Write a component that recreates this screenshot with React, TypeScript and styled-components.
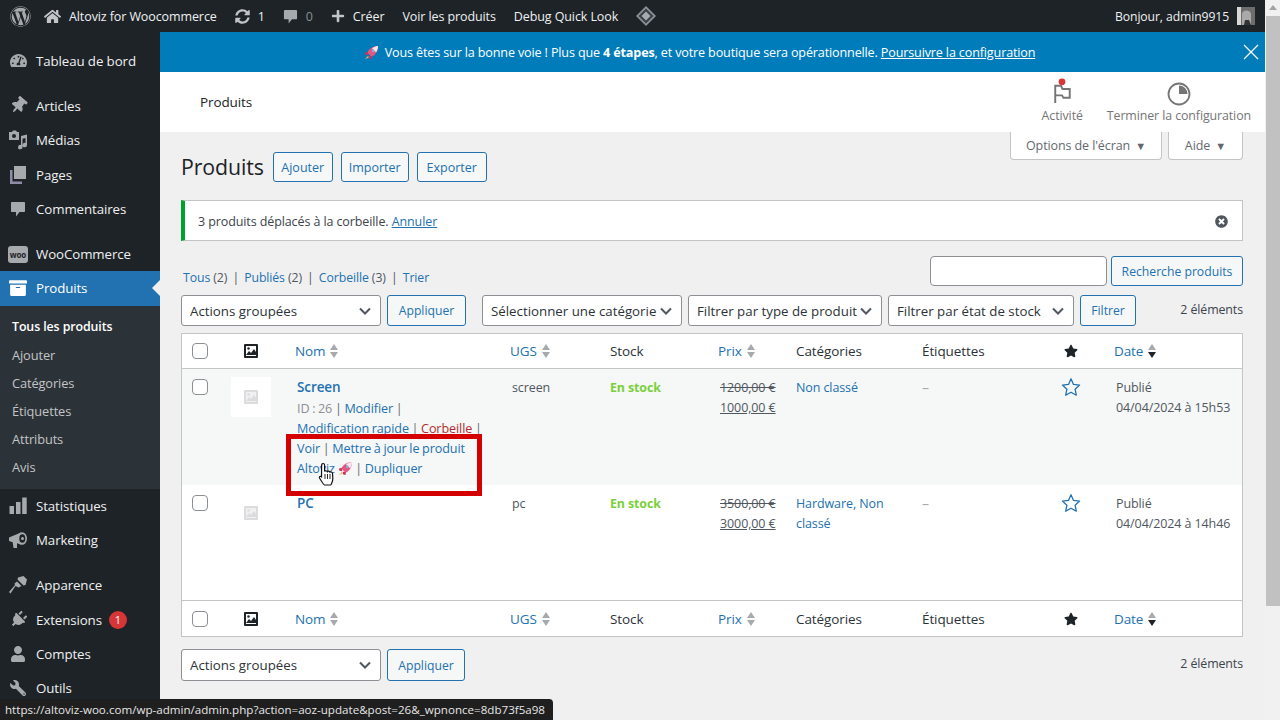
import React from 'react';
import styled, {createGlobalStyle} from "styled-components";
import {
    FaArchive, FaHome, FaPlug, FaPlus, FaStar,
    FaSyncAlt, FaTachometerAlt, FaThumbtack, FaTimesCircle, FaUser, FaWordpress, FaWrench
} from "react-icons/fa";

const GlobalStyle = createGlobalStyle`
    * { box-sizing: border-box; }
    html, body { margin: 0; padding: 0; overflow: hidden; }
    body {
        font-family: "Open Sans", "Noto Sans", sans-serif;
        font-size: 13px;
        letter-spacing: -0.1px;
        color: #3c434a;
    }
`

const blue = "#2271b1";

const COLUMNS = "49px 64px 215px 100px 108px 78px 126px 138px 54px 1fr";

const MediaIcon = () => (
    <svg width="20" height="20" viewBox="0 0 20 20" fill="#a7aaad">
        <path d="M1 2h3l1-1.500h3l1 1.500h2v8H1z"/>
        <circle cx="6" cy="6" r="2" fill="#1d2327"/>
        <path d="M13 6l6-1.500V15a2.200 2.200 0 1 1-1.500-2V8l-3 .7V17a2.200 2.200 0 1 1-1.500-2z"/>
    </svg>
);

const PagesIcon = () => (
    <svg width="18" height="20" viewBox="0 0 18 20" fill="#a7aaad">
        <path d="M5 1h12v13H5z"/>
        <path d="M1 5h2.500v11.500H13V19H1z" fill="#8f8ca8"/>
    </svg>
);

const StatsIcon = () => (
    <svg width="18" height="18" viewBox="0 0 18 18" fill="#a7aaad">
        <rect x="0.500" y="9" width="4.500" height="8"/>
        <rect x="7" y="5" width="4.500" height="12"/>
        <rect x="13.200" y="0.500" width="4.500" height="16.500"/>
    </svg>
);

const CommentIcon = ({size}: { size: number }) => (
    <svg width={size} height={size} viewBox="0 0 16 16" fill="#a7aaad">
        <path d="M2 1h12c.6 0 1 .4 1 1v8c0 .6-.4 1-1 1H9.500L6 15.500V11H2c-.6 0-1-.4-1-1V2c0-.6.4-1 1-1z"/>
    </svg>
);

const BrushIcon = () => (
    <svg width="20" height="20" viewBox="0 0 20 20" fill="#a7aaad">
        <path d="M10 2.500L15.500 1l3.500 3.500-1.500 5.500-2 .5-6-6z"/>
        <path d="M9 6.500l4.500 4.500-3 1.500L7.500 11 2.500 18.500 1 17l6-7-.5-1.500z"/>
    </svg>
);

const MegaphoneIcon = () => (
    <svg width="20" height="20" viewBox="0 0 20 20" fill="#a7aaad">
        <path d="M1 7.500L13 2.500v12L9 13.200V18H5.500l-.8-5.800L1 11z"/>
        <ellipse cx="14" cy="8.500" rx="5" ry="6.300"/>
        <ellipse cx="14.300" cy="8.500" rx="3" ry="4.300" fill="#1d2327"/>
        <circle cx="14.500" cy="8.500" r="1.500"/>
    </svg>
);

const RocketIcon = ({size}: { size: number }) => (
    <svg width={size} height={size} viewBox="0 0 16 16">
        <path d="M3.500 8C5.500 3.500 10 1 15 1c0 5-2.500 9.500-7 11.500z" fill="#e8557f"/>
        <path d="M8.500 3.500C10.500 2 12.500 1.200 15 1c0 2.500-.8 4.800-2.200 6.800z" fill="#f6e9ee"/>
        <circle cx="9.800" cy="6.200" r="1.400" fill="#7fb4d8"/>
        <path d="M4 7.500L1 8l.5 2.500 3 .3zM8.500 12L8 15l-2.500-.5-.3-3z" fill="#c7325f"/>
        <path d="M4.500 11.500L1 15l4-1.500z" fill="#f0b25a"/>
    </svg>
);

const FlagIcon = () => (
    <svg width="24" height="30" viewBox="0 0 24 30" fill="none">
        <path d="M5 27V9h6l1.500 3.500H20v9h-6.500L12 19H5" stroke="#757575" strokeWidth="2"/>
        <circle cx="12" cy="5" r="3.500" fill="#d63638"/>
    </svg>
);

const SetupIcon = () => (
    <svg width="24" height="24" viewBox="0 0 24 24">
        <circle cx="12" cy="12" r="10.500" fill="none" stroke="#757575" strokeWidth="1.800"/>
        <path d="M12 3.500A8.500 8.500 0 0 1 20.500 12H12z" fill="#757575"/>
    </svg>
);

const DiamondLogo = () => (
    <svg width="20" height="20" viewBox="0 0 20 20">
        <path d="M10 0l10 10-10 10L0 10z" fill="#8a9097"/>
        <path d="M10 2.500L17.500 10 10 17.500 2.500 10z" fill="#3a4046"/>
        <path d="M10 5.500L14.500 10 10 14.500 5.500 10z" fill="#a7aaad"/>
    </svg>
);

const ImageIcon = ({size, color, hole}: { size: number, color: string, hole: string }) => (
    <svg width={size} height={size} viewBox="0 0 14 14">
        <rect width="14" height="14" rx="1" fill={color}/>
        <path d="M2 2h10v10H2z" fill={hole}/>
        <circle cx="4.500" cy="4.500" r="1.200" fill={color}/>
        <path d="M2 11l3-4 2 2 3-4 2 3v3z" fill={color}/>
    </svg>
);

const OutlineStar = () => (
    <svg width="20" height="20" viewBox="0 0 20 20">
        <path d="M10 1.800l2.500 5.600 6.100.7-4.500 4.100 1.200 6L10 15.200l-5.300 3 1.200-6-4.500-4.100 6.100-.7z"
              fill="none" stroke={blue} strokeWidth="1.300" strokeLinejoin="round"/>
    </svg>
);

const HandCursor = () => (
    <svg width="18" height="24" viewBox="0 0 18 24">
        <path
            d="M5 1.500c1 0 1.600.7 1.600 1.700v6.300c.3-1 2.400-1 2.700.2.500-.8 2.300-.7 2.600.5.600-.6 2.400-.4 2.600 1.100l.3 5.200c0 2.900-1.700 6.500-2.200 6.500H6.500c-.6 0-2.700-3.200-5-7-.6-1.100.8-2.400 2-1.200l.1-11.100C3.600 2.200 4 1.500 5 1.500z"
            fill="#fff" stroke="#111" strokeWidth="1.200"/>
        <path d="M7 12v5M9.500 12v5M12 12v5" stroke="#111" strokeWidth="0.900"/>
    </svg>
);

const Avatar = () => (
    <svg width="18" height="18" viewBox="0 0 18 18">
        <rect width="18" height="18" fill="#6d6d6d"/>
        <rect width="4" height="18" fill="#d8d8d8"/>
        <path d="M5 18V7c0-4 8-5 9 0v11z" fill="#a9a9a9"/>
        <path d="M7 18l1-5h4l2 5z" fill="#333"/>
    </svg>
);

const Sort = ({active}: { active?: boolean }) => (
    <SortArrows>
        <UpArrow/>
        <DownArrow $active={active}/>
    </SortArrows>
);

type MenuEntry = { label: string, icon: React.ReactNode, gap?: boolean, badge?: string };

const renderEntry = (item: MenuEntry) => (
    <MenuItem key={item.label} $gap={item.gap}>
        <MenuIcon>{item.icon}</MenuIcon>
        {item.label}
        {item.badge && <Badge>{item.badge}</Badge>}
    </MenuItem>
);

const HeaderRow = () => (
    <TableHead>
        <CheckCell><Check type="checkbox"/></CheckCell>
        <HeadIcon><ImageIcon size={14} color="#1d2327" hole="#fff"/></HeadIcon>
        <SortLink>Nom <Sort/></SortLink>
        <SortLink>UGS <Sort/></SortLink>
        <HeadText>Stock</HeadText>
        <SortLink>Prix <Sort/></SortLink>
        <HeadText>Catégories</HeadText>
        <HeadText>Étiquettes</HeadText>
        <StarCell><FaStar size={14} color="#1d2327"/></StarCell>
        <SortLink>Date <Sort active/></SortLink>
    </TableHead>
);

export default function App() {
    const firstMenu: MenuEntry[] = [
        {label: "Tableau de bord", icon: <FaTachometerAlt size={17}/>},
        {label: "Articles", icon: <FaThumbtack size={17} style={{transform: "rotate(40deg)"}}/>, gap: true},
        {label: "Médias", icon: <MediaIcon/>},
        {label: "Pages", icon: <PagesIcon/>},
        {label: "Commentaires", icon: <CommentIcon size={16}/>},
        {label: "WooCommerce", icon: <WooIcon>woo</WooIcon>, gap: true},
    ];
    const secondMenu: MenuEntry[] = [
        {label: "Statistiques", icon: <StatsIcon/>},
        {label: "Marketing", icon: <MegaphoneIcon/>},
        {label: "Apparence", icon: <BrushIcon/>, gap: true},
        {label: "Extensions", icon: <FaPlug size={17} style={{transform: "rotate(45deg)"}}/>, badge: "1"},
        {label: "Comptes", icon: <FaUser size={16}/>},
        {label: "Outils", icon: <FaWrench size={16} style={{transform: "scaleX(-1)"}}/>},
    ];
    const subMenu = ["Tous les produits", "Ajouter", "Catégories", "Étiquettes", "Attributs", "Avis"];

    return (
        <>
            <GlobalStyle/>
            <Screen>
                <Page>
                    <AdminBar>
                        <BarGroup>
                            <WpLogo><FaWordpress size={21} color="#a7aaad"/></WpLogo>
                            <BarItem><FaHome size={17} color="#c3c4c7"/>Altoviz for Woocommerce</BarItem>
                            <BarItem><FaSyncAlt size={15} color="#c3c4c7"/>1</BarItem>
                            <BarItem $dim><CommentIcon size={15}/>0</BarItem>
                            <BarItem><FaPlus size={14} color="#c3c4c7"/>Créer</BarItem>
                            <BarItem>Voir les produits</BarItem>
                            <BarItem>Debug Quick Look</BarItem>
                            <BarItem><DiamondLogo/></BarItem>
                        </BarGroup>
                        <Greeting>Bonjour, admin9915 <Avatar/></Greeting>
                    </AdminBar>
                    <Body>
                        <Sidebar>
                            {firstMenu.map(renderEntry)}
                            <ActiveItem>
                                <MenuIcon><FaArchive size={18} color="#fff"/></MenuIcon>
                                Produits
                            </ActiveItem>
                            <SubMenu>
                                {subMenu.map((label, i) => <SubItem key={label} $current={i === 0}>{label}</SubItem>)}
                            </SubMenu>
                            {secondMenu.map(renderEntry)}
                        </Sidebar>
                        <Main>
                            <Banner>
                                <BannerText>
                                    <RocketIcon size={15}/> Vous êtes sur la bonne voie ! Plus que <b>4 étapes</b>, et
                                    votre boutique sera opérationnelle. <a>Poursuivre la configuration</a>
                                </BannerText>
                                <svg width="16" height="16" viewBox="0 0 16 16">
                                    <path d="M1 1l14 14M15 1L1 15" stroke="#fff" strokeWidth="1.300"/>
                                </svg>
                            </Banner>
                            <WooHeader>
                                <WooTitle>Produits</WooTitle>
                                <WooActions>
                                    <WooAction><FlagIcon/>Activité</WooAction>
                                    <WooAction><SetupIcon/>Terminer la configuration</WooAction>
                                </WooActions>
                            </WooHeader>
                            <Content>
                                <ScreenTabs>
                                    <ScreenTab $width={152}>Options de l'écran <small>▼</small></ScreenTab>
                                    <ScreenTab $width={75}>Aide <small>▼</small></ScreenTab>
                                </ScreenTabs>
                                <TitleRow>
                                    <Title>Produits</Title>
                                    <OutlineButton $width={60}>Ajouter</OutlineButton>
                                    <OutlineButton $width={68}>Importer</OutlineButton>
                                    <OutlineButton $width={70}>Exporter</OutlineButton>
                                </TitleRow>
                                <Notice>
                                    <span>3 produits déplacés à la corbeille. <a>Annuler</a></span>
                                    <FaTimesCircle size={13} color="#50575e"/>
                                </Notice>
                                <SearchRow>
                                    <Views>
                                        <a>Tous</a> (2) <i>|</i> <a>Publiés</a> (2) <i>|</i> <a>Corbeille</a> (3) <i>|</i> <a>Trier</a>
                                    </Views>
                                    <SearchBox>
                                        <SearchInput/>
                                        <ToolButton $width={132}>Recherche produits</ToolButton>
                                    </SearchBox>
                                </SearchRow>
                                <FilterRow>
                                    <Select $width={200} defaultValue="a"><option value="a">Actions groupées</option></Select>
                                    <ToolButton $width={79}>Appliquer</ToolButton>
                                    <FilterGap/>
                                    <Select $width={200} defaultValue="a"><option value="a">Sélectionner une catégorie</option></Select>
                                    <Select $width={194} defaultValue="a"><option value="a">Filtrer par type de produit</option></Select>
                                    <Select $width={186} defaultValue="a"><option value="a">Filtrer par état de stock</option></Select>
                                    <ToolButton $width={56}>Filtrer</ToolButton>
                                    <Count>2 éléments</Count>
                                </FilterRow>
                                <Table>
                                    <HeaderRow/>
                                    <ProductRow $height={116} $striped>
                                        <CheckCell><Check type="checkbox"/></CheckCell>
                                        <ThumbCell><ImageIcon size={14} color="#dcdcde" hole="#f0f0f1"/></ThumbCell>
                                        <NameCell>
                                            <ProductName>Screen</ProductName>
                                            <ActionLine><IdText>ID : 26</IdText> | <a>Modifier</a> |</ActionLine>
                                            <ActionLine><a>Modification rapide</a> | <Danger>Corbeille</Danger> |</ActionLine>
                                            <ActionLine><a>Voir</a> | <a>Mettre à jour le produit</a></ActionLine>
                                            <ActionLine><a>Altoviz <RocketIcon size={15}/></a> | <a>Dupliquer</a></ActionLine>
                                            <Highlight/>
                                            <CursorMark><HandCursor/></CursorMark>
                                        </NameCell>
                                        <Cell>screen</Cell>
                                        <StockCell>En stock</StockCell>
                                        <Cell><del>1200,00 €</del><br/><ins>1000,00 €</ins></Cell>
                                        <CategoryCell><a>Non classé</a></CategoryCell>
                                        <Dash>–</Dash>
                                        <RowStar><OutlineStar/></RowStar>
                                        <Cell>Publié<br/>04/04/2024 à 15h53</Cell>
                                    </ProductRow>
                                    <ProductRow $height={115}>
                                        <CheckCell><Check type="checkbox"/></CheckCell>
                                        <ThumbCell $plain><ImageIcon size={14} color="#dcdcde" hole="#f0f0f1"/></ThumbCell>
                                        <NameCell><ProductName>PC</ProductName></NameCell>
                                        <Cell>pc</Cell>
                                        <StockCell>En stock</StockCell>
                                        <Cell><del>3500,00 €</del><br/><ins>3000,00 €</ins></Cell>
                                        <CategoryCell><a>Hardware, Non classé</a></CategoryCell>
                                        <Dash>–</Dash>
                                        <RowStar><OutlineStar/></RowStar>
                                        <Cell>Publié<br/>04/04/2024 à 14h46</Cell>
                                    </ProductRow>
                                    <HeaderRow/>
                                </Table>
                                <BottomRow>
                                    <Select $width={200} defaultValue="a"><option value="a">Actions groupées</option></Select>
                                    <ToolButton $width={78}>Appliquer</ToolButton>
                                    <Count>2 éléments</Count>
                                </BottomRow>
                            </Content>
                        </Main>
                    </Body>
                    <StatusTip>https://altoviz-woo.com/wp-admin/admin.php?action=aoz-update&amp;post=26&amp;_wpnonce=8db73f5a98</StatusTip>
                </Page>
                <ScrollTrack>
                    <ScrollArrow/>
                    <ScrollThumb/>
                </ScrollTrack>
            </Screen>
        </>
    );
}

const Screen = styled.div`
    width: 1280px;
    height: 720px;
    display: flex;
    overflow: hidden;
    background: #f0f0f1;
`
const Page = styled.div`
    position: relative;
    flex: 1;
    min-width: 0;
    display: flex;
    flex-direction: column;
`
const ScrollTrack = styled.div`
    width: 15px;
    background: #f1f1f1;
    padding-top: 5px;
`
const ScrollArrow = styled.div`
    width: 0;
    margin: 0 auto 6px;
    border-left: 4px solid transparent;
    border-right: 4px solid transparent;
    border-bottom: 5px solid #a3a3a3;
`
const ScrollThumb = styled.div`
    height: 590px;
    margin-left: 1px;
    background: #c1c1c1;
`
const AdminBar = styled.header`
    height: 32px;
    flex: none;
    background: #1d2327;
    color: #f0f0f1;
    display: flex;
    align-items: center;
    justify-content: space-between;
    padding-right: 10px;
`
const BarGroup = styled.div`
    display: flex;
    align-items: center;
    gap: 18px;
`
const WpLogo = styled.div`
    display: flex;
    margin: 0 -5px 0 10px;
`
const BarItem = styled.div<{ $dim?: boolean }>`
    display: flex;
    align-items: center;
    gap: 8px;
    font-size: 12.5px;
    white-space: nowrap;
    color: ${p => p.$dim ? "#8c8f94" : "#f0f0f1"};
`
const Greeting = styled(BarItem)`
    font-size: 12.2px;
`
const Body = styled.div`
    flex: 1;
    min-height: 0;
    display: flex;
`
const Sidebar = styled.nav`
    width: 160px;
    flex: none;
    background: #1d2327;
    padding-top: 11.5px;
    color: #f0f0f1;
`
const MenuItem = styled.div<{ $gap?: boolean }>`
    height: 34.3px;
    margin-top: ${p => p.$gap ? "11px" : "0"};
    display: flex;
    align-items: center;
    font-size: 13.3px;
`
const MenuIcon = styled.span`
    width: 36px;
    flex: none;
    display: flex;
    justify-content: center;
    color: #a7aaad;
`
const WooIcon = styled.span`
    width: 20px;
    height: 17px;
    border-radius: 3px;
    background: #a7aaad;
    color: #1d2327;
    font-size: 8px;
    font-weight: 700;
    line-height: 17px;
    text-align: center;
`
const Badge = styled.span`
    width: 18px;
    height: 18px;
    margin-left: 7px;
    border-radius: 50%;
    background: #d63638;
    color: #fff;
    font-size: 11px;
    line-height: 18px;
    text-align: center;
`
const ActiveItem = styled(MenuItem)`
    position: relative;
    background: ${blue};
    color: #fff;
    &::after {
        content: '';
        position: absolute;
        right: 0;
        top: 9px;
        border: 8px solid transparent;
        border-right-color: #f0f0f1;
        border-left-width: 0;
    }
`
const SubMenu = styled.div`
    background: #2c3338;
    padding: 7px 0 8px;
`
const SubItem = styled.div<{ $current?: boolean }>`
    height: 28px;
    padding-left: 12px;
    font-size: ${p => p.$current ? "12.4px" : "12.8px"};
    line-height: 28px;
    color: ${p => p.$current ? "#fff" : "#c3c4c7"};
    font-weight: ${p => p.$current ? 600 : 400};
`
const Main = styled.main`
    flex: 1;
    min-width: 0;
    display: flex;
    flex-direction: column;
`
const Banner = styled.div`
    height: 40px;
    flex: none;
    background: #007cba;
    color: #fff;
    display: flex;
    align-items: center;
    padding-right: 6px;
`
const BannerText = styled.div`
    flex: 1;
    padding-right: 4px;
    text-align: center;
    font-size: 12.6px;
    letter-spacing: -0.15px;
    a { text-decoration: underline; }
    svg { vertical-align: -3px; margin-right: 3px; }
`
const WooHeader = styled.div`
    height: 60px;
    flex: none;
    background: #fff;
    display: flex;
    align-items: center;
    justify-content: space-between;
    padding: 0 14px 0 40px;
`
const WooTitle = styled.div`
    font-size: 13.5px;
    font-weight: 500;
    color: #1d2327;
`
const WooActions = styled.div`
    display: flex;
    gap: 24px;
`
const WooAction = styled.div`
    display: flex;
    flex-direction: column;
    align-items: center;
    justify-content: flex-end;
    height: 50px;
    padding-bottom: 3px;
    gap: 1px;
    font-size: 12.4px;
    color: #757575;
`
const Content = styled.div`
    position: relative;
    flex: 1;
    padding: 20px 22px 0 21px;
`
const ScreenTabs = styled.div`
    position: absolute;
    top: 0;
    right: 22px;
    display: flex;
    gap: 6px;
`
const ScreenTab = styled.div<{ $width: number }>`
    width: ${p => p.$width}px;
    height: 28px;
    background: #fff;
    border: 1px solid #c3c4c7;
    border-top: 0;
    border-radius: 0 0 4px 4px;
    font-size: 12.5px;
    line-height: 27px;
    text-align: center;
    color: #646970;
    small { font-size: 11px; margin-left: 2px; }
`
const TitleRow = styled.div`
    height: 30px;
    display: flex;
    align-items: center;
    gap: 8px;
`
const Title = styled.h1`
    margin: -2px 1px 0 0;
    font-size: 21.3px;
    font-weight: 400;
    color: #1d2327;
`
const OutlineButton = styled.button<{ $width: number }>`
    width: ${p => p.$width}px;
    height: 30px;
    padding: 0;
    border: 1px solid ${blue};
    border-radius: 3px;
    background: #f6f7f7;
    color: ${blue};
    font: inherit;
    font-size: 12.5px;
`
const Notice = styled.div`
    height: 41px;
    margin-top: 18px;
    padding: 1px 14px 0 13px;
    background: #fff;
    border: 1px solid #c3c4c7;
    border-left: 4px solid #00a32a;
    display: flex;
    align-items: center;
    justify-content: space-between;
    font-size: 12.5px;
    a { color: ${blue}; text-decoration: underline; }
`
const SearchRow = styled.div`
    height: 30px;
    margin-top: 15px;
    display: flex;
    justify-content: space-between;
`
const Views = styled.div`
    padding: 13px 0 0 2px;
    font-size: 12.3px;
    line-height: 18px;
    color: #50575e;
    a { color: ${blue}; }
    i { font-style: normal; margin: 0 2px; }
`
const SearchBox = styled.div`
    display: flex;
    gap: 4px;
`
const SearchInput = styled.input`
    width: 177px;
    height: 30px;
    border: 1px solid #8c8f94;
    border-radius: 4px;
    background: #fff;
`
const ToolButton = styled(OutlineButton)`
    font-size: 12.2px;
    height: 100%;
`
const FilterRow = styled.div`
    height: 31px;
    margin-top: 9px;
    display: flex;
    align-items: stretch;
    gap: 6px;
`
const FilterGap = styled.div`
    width: 4px;
`
const Select = styled.select<{ $width: number }>`
    width: ${p => p.$width}px;
    appearance: none;
    padding: 0 20px 0 8px;
    border: 1px solid #8c8f94;
    border-radius: 3px;
    font: inherit;
    font-size: 13.3px;
    color: #2c3338;
    background: #fff url("data:image/svg+xml,%3Csvg xmlns='http://www.w3.org/2000/svg' width='12' height='8' viewBox='0 0 12 8'%3E%3Cpath d='M1 1.500l5 5 5-5' fill='none' stroke='%2350575e' stroke-width='2'/%3E%3C/svg%3E") no-repeat right 9px center;
`
const Count = styled.div`
    margin-left: auto;
    padding-top: 6px;
    font-size: 12.4px;
    color: #3c434a;
`
const Table = styled.div`
    margin-top: 7px;
    background: #fff;
    border: 1px solid #c3c4c7;
`
const TableHead = styled.div`
    height: 35px;
    display: grid;
    grid-template-columns: ${COLUMNS};
    align-items: center;
    border-bottom: 1px solid #c3c4c7;
    &:last-child {
        height: 36px;
        border-bottom: 0;
        border-top: 1px solid #c3c4c7;
    }
`
const CheckCell = styled.div`
    padding-left: 10px;
    display: flex;
`
const Check = styled.input`
    appearance: none;
    width: 16px;
    height: 16px;
    margin: 0;
    border: 1px solid #8c8f94;
    border-radius: 4px;
    background: #fff;
`
const HeadIcon = styled.div`
    padding-left: 13px;
    display: flex;
`
const SortLink = styled.div`
    display: flex;
    align-items: center;
    gap: 5px;
    font-size: 13.5px;
    color: ${blue};
`
const HeadText = styled.div`
    font-size: 13.5px;
    color: #2c3338;
`
const SortArrows = styled.span`
    display: inline-flex;
    flex-direction: column;
    gap: 2px;
`
const UpArrow = styled.span`
    border-left: 4.500px solid transparent;
    border-right: 4.500px solid transparent;
    border-bottom: 6px solid #a7aaad;
`
const DownArrow = styled.span<{ $active?: boolean }>`
    border-left: 4.500px solid transparent;
    border-right: 4.500px solid transparent;
    border-top: 6px solid ${p => p.$active ? "#1d2327" : "#a7aaad"};
`
const StarCell = styled.div`
    display: flex;
    padding-left: 4px;
`
const ProductRow = styled.div<{ $height: number, $striped?: boolean }>`
    height: ${p => p.$height}px;
    display: grid;
    grid-template-columns: ${COLUMNS};
    align-items: start;
    padding-top: 8px;
    background: ${p => p.$striped ? "#f6f7f7" : "#fff"};
    line-height: 20px;
    color: #50575e;
    a { color: ${blue}; }
    ${CheckCell} { padding-top: 2px; }
`
const ThumbCell = styled.div<{ $plain?: boolean }>`
    width: 40px;
    height: 40px;
    background: ${p => p.$plain ? "transparent" : "#fff"};
    display: flex;
    align-items: center;
    justify-content: center;
`
const NameCell = styled.div`
    position: relative;
    padding-left: 2px;
    white-space: nowrap;
`
const ProductName = styled.div`
    margin-bottom: 1.5px;
    font-size: 13.5px;
    font-weight: 600;
    color: ${blue};
`
const ActionLine = styled.div`
    font-size: 12.6px;
    word-spacing: -0.5px;
    color: #646970;
    svg { vertical-align: -3px; }
`
const IdText = styled.span`
    color: #8c8f94;
`
const Danger = styled.span`
    color: #b32d2e;
`
const Highlight = styled.div`
    position: absolute;
    left: -9px;
    top: 57px;
    width: 196px;
    height: 62px;
    border: 5px solid #d40000;
`
const CursorMark = styled.div`
    position: absolute;
    left: 23px;
    top: 85px;
`
const Cell = styled.div`
    margin-top: 1px;
    padding-left: 2px;
    font-size: 12.5px;
    del, ins { color: #50575e; }
`
const CategoryCell = styled.div`
    margin-top: 1px;
    padding-right: 24px;
    font-size: 12.5px;
`
const StockCell = styled.div`
    margin-top: 1px;
    font-size: 12.4px;
    font-weight: 700;
    color: #7ad03a;
`
const Dash = styled.div`
    margin-top: 1px;
    font-size: 14px;
    color: #a7aaad;
`
const RowStar = styled.div`
    display: flex;
    padding-left: 1px;
`
const BottomRow = styled.div`
    height: 32px;
    margin-top: 12px;
    display: flex;
    align-items: stretch;
    gap: 6px;
`
const StatusTip = styled.div`
    position: absolute;
    left: 0;
    bottom: 0;
    width: 553px;
    height: 21px;
    padding-left: 5px;
    background: #1f1f1f;
    border-top-right-radius: 4px;
    color: #e6e6e6;
    font-size: 11.6px;
    line-height: 21px;
    white-space: nowrap;
    letter-spacing: 0;
`
